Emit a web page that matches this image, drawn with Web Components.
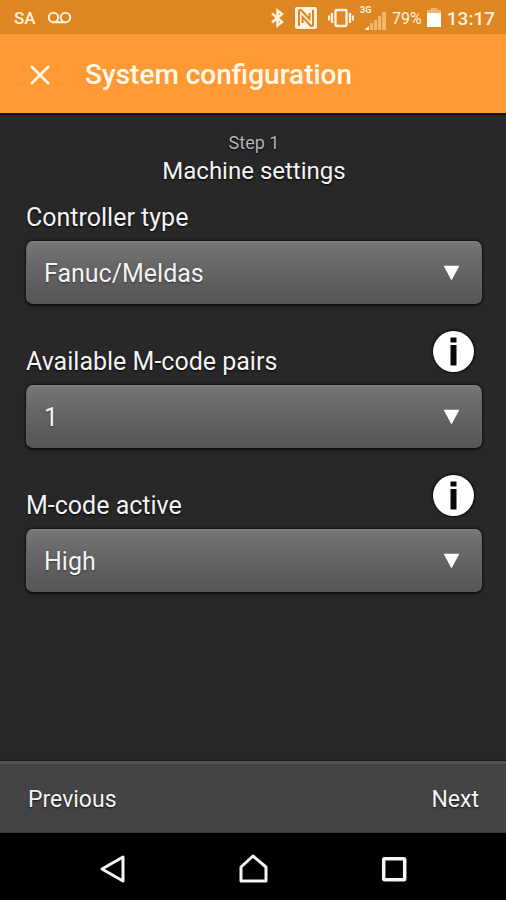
<!DOCTYPE html>
<html lang="en">
<head>
<meta charset="utf-8">
<meta name="viewport" content="width=device-width, initial-scale=1">
<title>System configuration</title>
<style>
  html, body { margin: 0; height: 100%; }
  body { background: #282828; color: #f4f4f4; font-family: Roboto, "Liberation Sans", sans-serif; }
</style>
</head>
<body>
<config-screen>
  <status-bar slot="top"></status-bar>
  <title-bar slot="top">System configuration</title-bar>
  <step-heading step="Step 1">Machine settings</step-heading>
  <select-field label="Controller type" options="Fanuc/Meldas"></select-field>
  <select-field label="Available M-code pairs" options="1" info></select-field>
  <select-field label="M-code active" options="High|Low" info></select-field>
  <step-actions slot="bottom"></step-actions>
  <system-nav slot="bottom"></system-nav>
</config-screen>

<script>
const base = `
  :host, * { box-sizing: border-box; }
  button { appearance: none; border: 0; padding: 0; margin: 0; background: none; color: inherit; font: inherit; cursor: pointer; }
  svg { display: block; }
`;

function define(name, render) {
  customElements.define(name, class extends HTMLElement {
    connectedCallback() {
      if (this.shadowRoot) return;
      this.attachShadow({ mode: 'open' }).innerHTML = render(this);
    }
  });
}

define('config-screen', () => `
<style>${base}
  :host { display: flex; flex-direction: column; min-height: 100vh; }
  main { flex: 1; padding: 16px 24px 24px 26px; display: flex; flex-direction: column; }
</style>
<slot name="top"></slot>
<main><slot></slot></main>
<slot name="bottom"></slot>`);

define('status-bar', () => `
<style>${base}
  :host { display: flex; align-items: center; justify-content: space-between; height: 34px; padding: 2px 11px 0 14px; background: #de8622; color: #fff3df; }
  div { display: flex; align-items: center; }
  .left { gap: 11px; font-size: 17px; font-weight: 500; }
  .icons { gap: 11px; }
  .signal { margin: 0 5px 0 6px; }
  .level { font-size: 16px; }
  .battery { margin: 0 6px 0 5px; }
  .time { font-size: 19px; font-weight: 500; }
</style>
<div class="left">
  <span>SA</span>
  <svg width="26" height="14" viewBox="0 0 26 14" fill="none" stroke="currentColor" stroke-width="2"><circle cx="6.500" cy="6.500" r="4.700"/><circle cx="18.500" cy="6.500" r="4.700"/><path d="M6 11.300H19"/></svg>
</div>
<div>
  <div class="icons">
    <svg width="14" height="20" viewBox="0 0 14 20" fill="none" stroke="currentColor" stroke-width="2.400"><path d="M2 5.500L12 14L7.500 17.500V2.500L12 6L2 14.500"/></svg>
    <svg width="22" height="22" viewBox="0 0 22 22"><rect width="22" height="22" rx="2" fill="currentColor"/><path d="M4 19V4C4 3 5.500 2.500 6.500 3.500L14.500 12V6M18 3V18C18 19 16.500 19.500 15.500 18.500L7.500 10V16" fill="none" stroke="#de8622" stroke-width="2"/></svg>
    <svg width="26" height="20" viewBox="0 0 26 20" fill="none" stroke="currentColor" stroke-width="2.300"><rect x="7.500" y="2" width="11" height="16" rx="1"/><path d="M4 5V15M22 5V15M1 7.500V12.500M25 7.500V12.500"/></svg>
  </div>
  <svg class="signal" width="27" height="28" viewBox="0 0 27 28"><text x="0" y="9" font-size="9" font-weight="700" fill="currentColor">3G</text><g fill="#f1b873"><path d="M10 19h3v7h-3zM14 16h3v10h-3zM18 12h3v14h-3zM22 8h4v18h-4z"/></g><path d="M5 26V25L9 22V26Z" fill="currentColor"/></svg>
  <span class="level">79%</span>
  <svg class="battery" width="14" height="20" viewBox="0 0 14 20"><path d="M4 0h6v2h4v3H0V2h4z" fill="#eeb673"/><path d="M0 5h14v14H0z" fill="#fff"/></svg>
  <span class="time">13:17</span>
</div>`);

define('title-bar', () => `
<style>${base}
  :host { display: flex; align-items: center; gap: 34px; height: 81px; padding: 3px 24px 0 29px; background: #ff9933; color: #fff8ec; border-bottom: 2px solid #141414; }
  h1 { margin: 0; font-size: 28px; line-height: 32px; font-weight: 500; }
</style>
<button type="button" aria-label="Close"><svg width="22" height="22" viewBox="0 0 22 22" fill="none" stroke="currentColor" stroke-width="2.500"><path d="M2 2L20 20M20 2L2 20"/></svg></button>
<h1><slot></slot></h1>`);

define('step-heading', host => `
<style>${base}
  :host { display: block; text-align: center; text-shadow: 0 1px 2px #000; }
  p { margin: 0; font-size: 18px; line-height: 24px; color: #b4b4b4; }
  h2 { margin: 0; font-size: 24px; line-height: 32px; font-weight: 400; }
</style>
<p>${host.getAttribute('step')}</p>
<h2><slot></slot></h2>`);

define('select-field', host => `
<style>${base}
  :host { display: block; }
  :host([info]) { margin-top: 27px; }
  .head { display: flex; align-items: flex-end; justify-content: space-between; padding: 0 8px 7px 0; margin-top: 15px; }
  :host([info]) .head { height: 54px; margin-top: 0; }
  label { font-size: 25px; line-height: 32px; text-shadow: 0 1px 2px #000; }
  .info { margin-bottom: 6px; border-radius: 50%; box-shadow: 0 0 2px 1px #080808; }
  .box { position: relative; }
  select { appearance: none; display: block; width: 100%; height: 63px; padding: 2px 60px 0 17px; border: 1px solid #666; border-top-color: #858585; border-bottom-color: #565656; border-radius: 7px; color: #f4f4f4; font: 25px Roboto, "Liberation Sans", sans-serif; text-shadow: 0 1px 2px #333; background: linear-gradient(#777, #686868 35%, #555); box-shadow: 0 0 2px 1px #111, 0 2px 2px #111; }
  .arrow { position: absolute; right: 22px; top: 50%; transform: translateY(-50%); pointer-events: none; }
</style>
<div class="head">
  <label for="choice">${host.getAttribute('label')}</label>
  ${host.hasAttribute('info') ? `<button class="info" type="button" aria-label="About ${host.getAttribute('label')}"><svg width="41" height="41" viewBox="0 0 41 41"><circle cx="20.500" cy="20.500" r="20.500" fill="#fff"/><path d="M17.500 6.500h6v5h-6zM17.500 14h6v20.500h-6z" fill="#080808"/></svg></button>` : ''}
</div>
<div class="box">
  <select id="choice">${host.getAttribute('options').split('|').map(o => `<option>${o}</option>`).join('')}</select>
  <svg class="arrow" width="17" height="15" viewBox="0 0 17 15"><path d="M0.500 0H16.500L8.500 15Z" fill="#fff"/></svg>
</div>`);

define('step-actions', () => `
<style>${base}
  :host { display: flex; align-items: center; justify-content: space-between; height: 72px; padding: 4px 27px 0 28px; background: #444; border-top: 3px solid #545454; border-bottom: 1px solid #363636; box-shadow: 0 -1px 1px #1c1c1c; }
  button { font-size: 23px; line-height: 32px; text-shadow: 0 1px 2px #111; }
</style>
<button type="button">Previous</button>
<button type="button">Next</button>`);

define('system-nav', () => `
<style>${base}
  :host { display: grid; grid-template-columns: repeat(3, 1fr); align-items: center; justify-items: center; height: 67px; padding: 4px 42px 0; background: #000; color: #f5f5f5; }
</style>
<button type="button" aria-label="Back"><svg width="28" height="30" viewBox="0 0 28 30" fill="none" stroke="currentColor" stroke-width="3" stroke-linejoin="round"><path d="M25 3V27L4 15Z"/></svg></button>
<button type="button" aria-label="Home"><svg width="30" height="30" viewBox="0 0 30 30" fill="none" stroke="currentColor" stroke-width="3" stroke-linejoin="round"><path d="M3 27V13L15 2L28 13V27Z"/></svg></button>
<button type="button" aria-label="Recent apps"><svg width="26" height="26" viewBox="0 0 26 26" fill="none" stroke="currentColor" stroke-width="3.500"><rect x="2.700" y="2.700" width="21" height="21" rx="1"/></svg></button>`);
</script>
</body>
</html>
